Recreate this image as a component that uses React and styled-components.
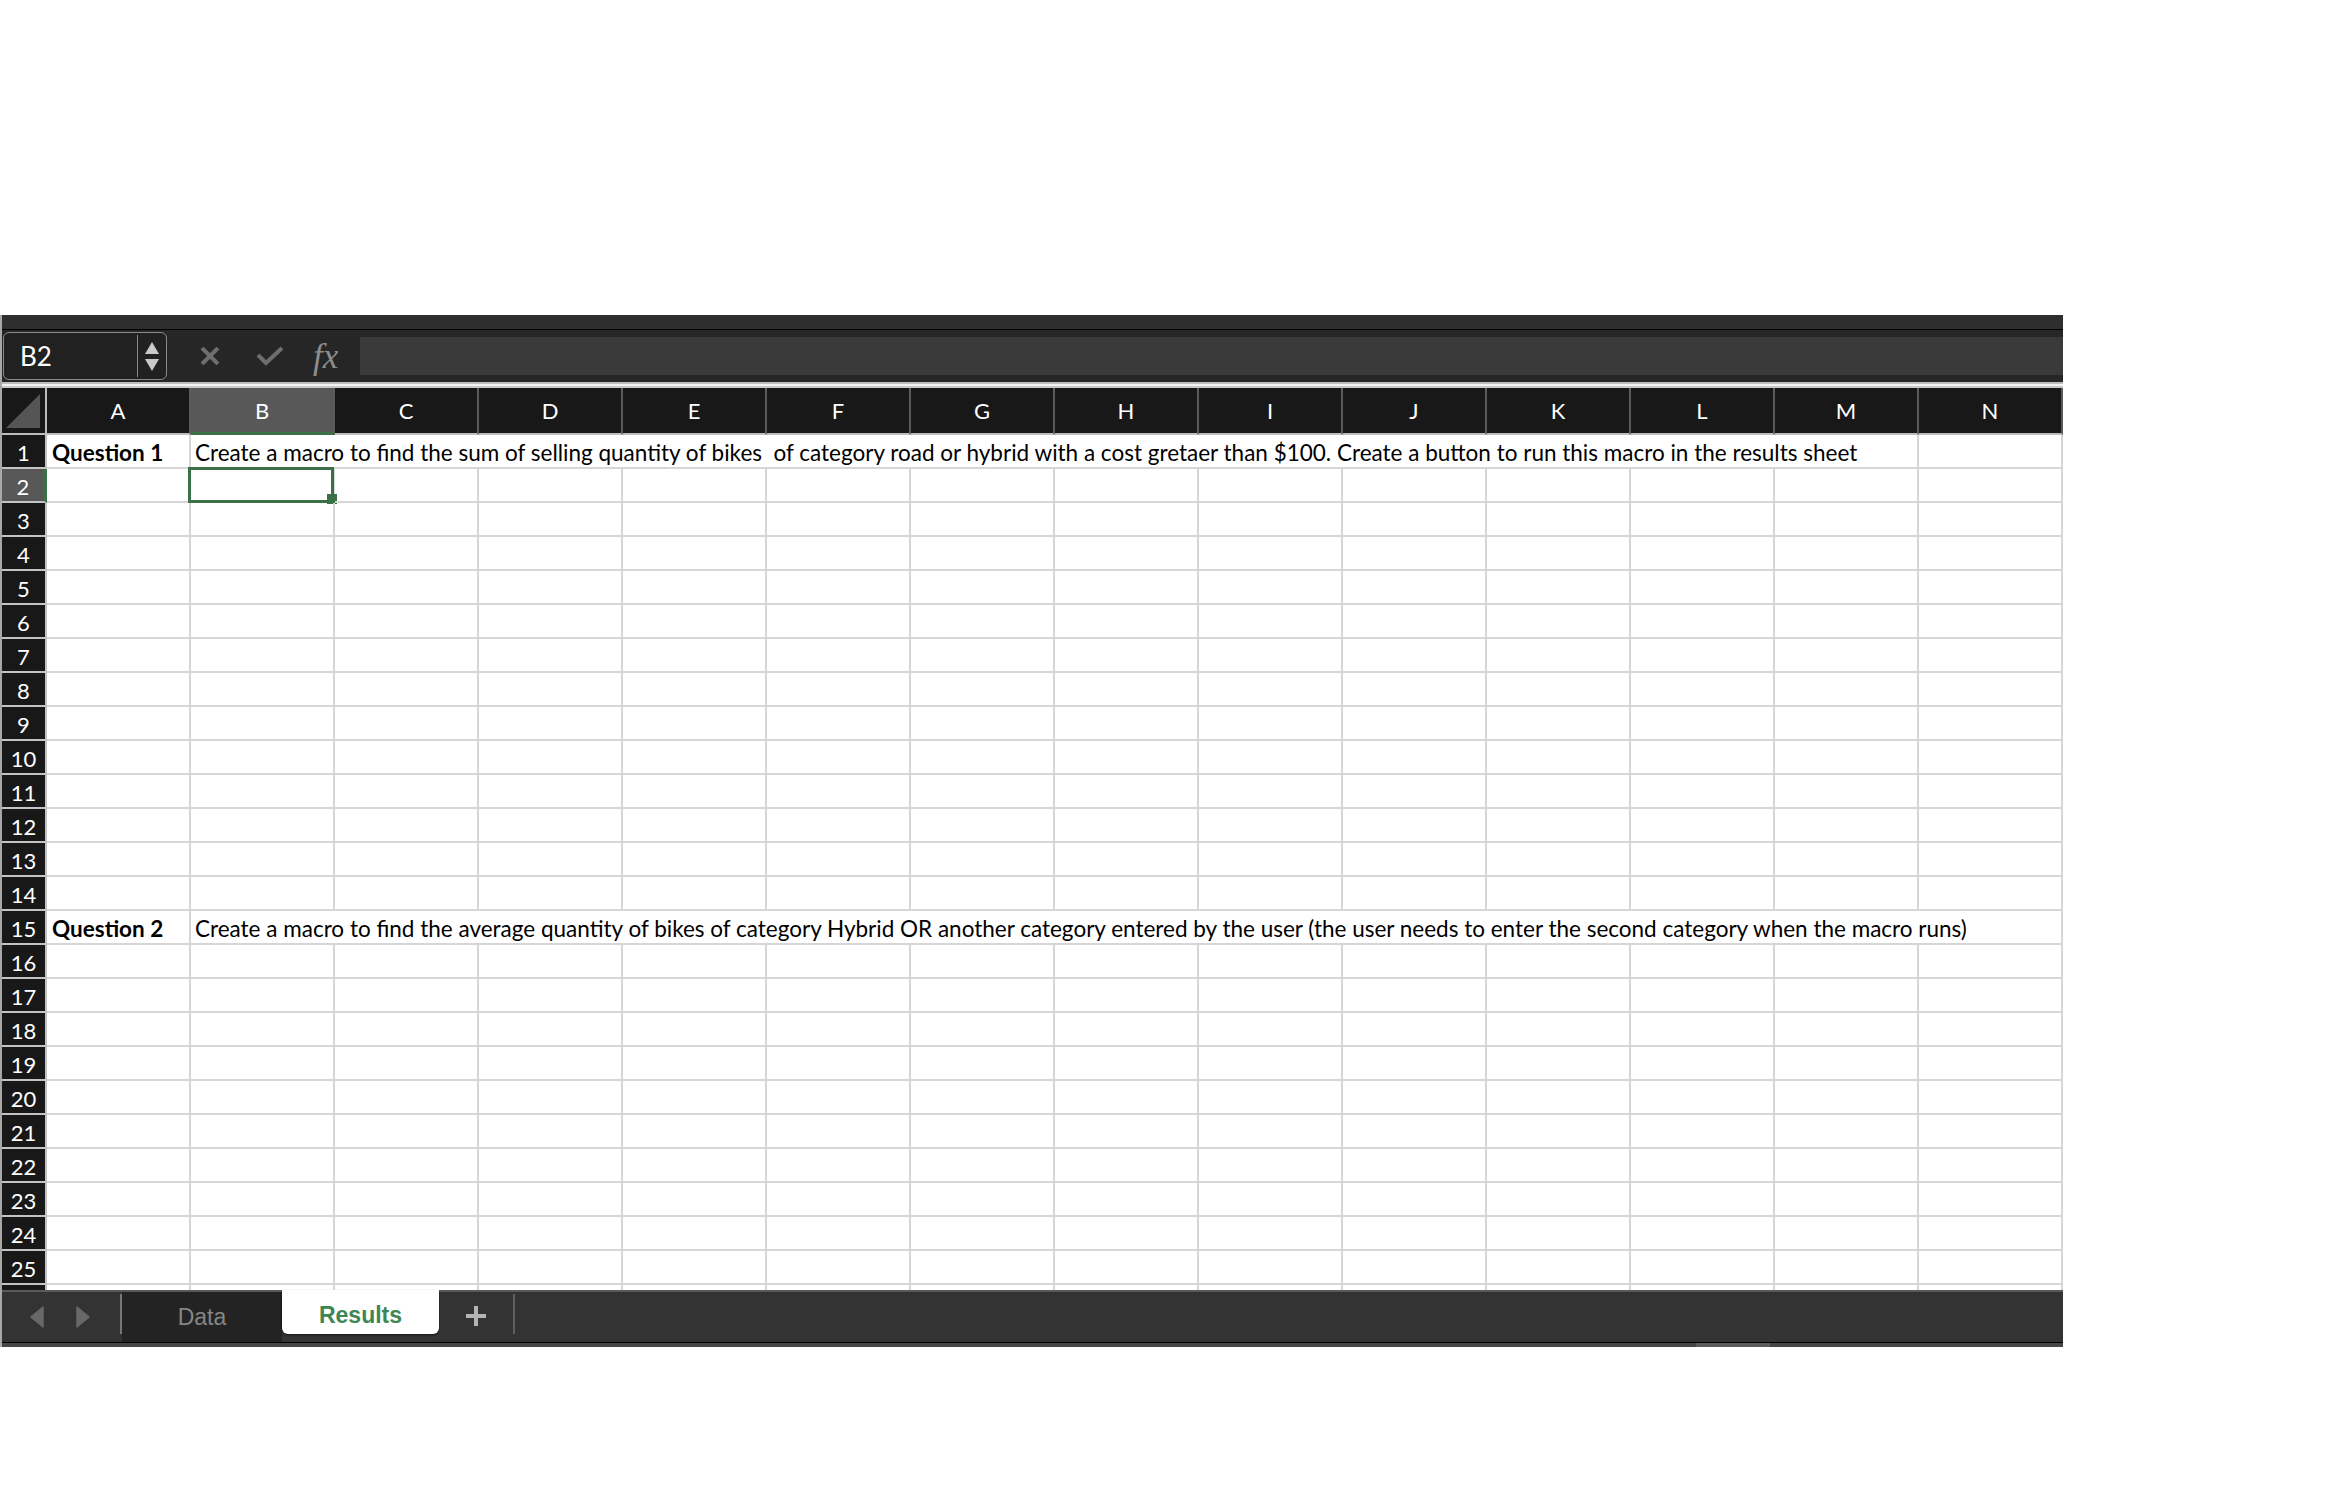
import styled, { createGlobalStyle } from "styled-components";

const GlobalStyle = createGlobalStyle`
  html, body {
    margin: 0;
    padding: 0;
    background: #ffffff;
  }
  body {
    font-family: "Lato", "Liberation Sans", sans-serif;
  }
`;

const COLUMNS = ["A", "B", "C", "D", "E", "F", "G", "H", "I", "J", "K", "L", "M", "N"];
const ROW_COUNT = 26;
const VISIBLE_ROWS = 25;
const SELECTED = { col: "B", row: 2 };

const QUESTIONS = {
  1: {
    label: "Question 1",
    text: "Create a macro to find the sum of selling quantity of bikes  of category road or hybrid with a cost gretaer than $100. Create a button to run this macro in the results sheet",
    span: 12,
  },
  15: {
    label: "Question 2",
    text: "Create a macro to find the average quantity of bikes of category Hybrid OR another category entered by the user (the user needs to enter the second category when the macro runs)",
    span: 13,
  },
};

const GREEN = "#3b7049";
const GRID_LINE = "#d6d6d6";

const Workbook = styled.div`
  width: 2063px;
  margin-top: 315px;
  border-left: 2px solid #a8a8a8;
  box-sizing: border-box;
`;

const TitleStrip = styled.div`
  height: 14px;
  background: #2e2e2e;
  border-bottom: 1px solid #000;
`;

const FormulaBar = styled.div`
  display: flex;
  align-items: center;
  height: 52px;
  background: #262626;
  padding-left: 1px;
`;

const NameBox = styled.div`
  display: flex;
  align-items: center;
  width: 164px;
  height: 48px;
  box-sizing: border-box;
  border: 1.5px solid #8a8a8a;
  border-radius: 6px;
  background: #212121;
`;

const NameText = styled.span`
  flex: 1;
  padding-left: 16px;
  color: #ffffff;
  font-size: 26px;
`;

const NameDivider = styled.span`
  width: 1.5px;
  height: 42px;
  background: #8a8a8a;
`;

const Spinner = styled.span`
  display: flex;
  flex-direction: column;
  align-items: center;
  gap: 5px;
  width: 28px;
`;

const ActionIcon = styled.span`
  display: flex;
  align-items: center;
  justify-content: center;
  width: ${(p) => p.$width}px;
  height: 40px;
`;

const Fx = styled.span`
  width: 73px;
  box-sizing: border-box;
  padding-left: 26px;
  color: #8d8d8d;
  font-family: "Liberation Serif", "DejaVu Serif", serif;
  font-style: italic;
  font-size: 35px;
  line-height: 1;
`;

const FormulaInput = styled.div`
  flex: 1;
  height: 38px;
  background: #3a3a3a;
`;

const Separator = styled.div`
  height: 6px;
  background: linear-gradient(#bdbdbd 0 2px, #f2f2f2 2px 4px, #c9c9c9 4px 6px);
`;

const Grid = styled.div`
  display: grid;
  grid-template-columns: 45px repeat(14, 144px);
  grid-template-rows: 47px repeat(${ROW_COUNT}, 34px);
  height: 902px;
  overflow: hidden;
  background: #ffffff;
`;

const Corner = styled.div`
  display: flex;
  align-items: flex-end;
  justify-content: flex-end;
  padding: 0 5px 5px 0;
  box-sizing: border-box;
  background: #181818;
  border-right: 2px solid #bdbdbd;
  border-bottom: 2px solid #bdbdbd;
`;

const ColHeader = styled.div`
  display: flex;
  align-items: center;
  justify-content: center;
  box-sizing: border-box;
  background: ${(p) => (p.$selected ? "#585858" : "#181818")};
  border-right: 2px solid #5a5a5a;
  border-bottom: ${(p) => (p.$selected ? `3px solid ${GREEN}` : "2px solid #bdbdbd")};
  color: #ffffff;
  font-size: 22px;
  padding-top: ${(p) => (p.$selected ? "1px" : "0")};
`;

const RowHeader = styled.div`
  display: flex;
  align-items: center;
  justify-content: center;
  box-sizing: border-box;
  background: ${(p) => (p.$selected ? "#585858" : "#181818")};
  border-right: ${(p) => (p.$selected ? `3px solid ${GREEN}` : "2px solid #c4c4c4")};
  border-bottom: 2px solid #c4c4c4;
  color: #ffffff;
  font-size: 22px;
  padding-top: 2px;
`;

const Cell = styled.div`
  position: relative;
  display: flex;
  align-items: center;
  box-sizing: border-box;
  grid-column: span ${(p) => p.$span || 1};
  border-right: 2px solid ${GRID_LINE};
  border-bottom: 2px solid ${GRID_LINE};
  padding: 3px 0 0 ${(p) => (p.$bold ? 5 : 4)}px;
  color: #000000;
  font-size: 22.5px;
  font-weight: ${(p) => (p.$bold ? 700 : 400)};
  white-space: pre;
`;

const Selection = styled.div`
  position: absolute;
  top: -2px;
  right: -1px;
  bottom: -2px;
  left: -3px;
  border: 3px solid ${GREEN};
  pointer-events: none;
`;

const FillHandle = styled.span`
  position: absolute;
  right: -6px;
  bottom: -4px;
  width: 10px;
  height: 10px;
  background: ${GREEN};
`;

const TabBar = styled.div`
  display: flex;
  align-items: flex-start;
  height: 52px;
  background: #333333;
  box-shadow: inset 0 2px 0 #5a5a5a;
  font-family: "Liberation Sans", Arial, sans-serif;
  font-size: 23px;
`;

const TabNav = styled.div`
  display: flex;
  align-items: center;
  gap: 32px;
  width: 118px;
  height: 50px;
  margin-top: 2px;
  padding-left: 28px;
  box-sizing: border-box;
`;

const TabDivider = styled.span`
  width: 2px;
  height: 40px;
  margin-top: 4px;
  background: ${(p) => p.$color || "#6c6c6c"};
`;

const Tab = styled.div`
  display: flex;
  align-items: center;
  justify-content: center;
  box-sizing: border-box;
  width: ${(p) => p.$width}px;
  height: ${(p) => (p.$active ? 44 : 50)}px;
  margin-top: ${(p) => (p.$active ? 0 : 2)}px;
  padding-top: ${(p) => (p.$active ? 6 : 0)}px;
  background: ${(p) => (p.$active ? "#ffffff" : "#232323")};
  border-radius: ${(p) => (p.$active ? "0 0 6px 6px" : "0")};
  box-shadow: ${(p) => (p.$active ? "0 1px 2px rgba(0, 0, 0, 0.6)" : "none")};
  color: ${(p) => (p.$active ? "#3e8654" : "#858585")};
  font-weight: ${(p) => (p.$active ? 700 : 400)};
`;

const AddSheet = styled.span`
  display: flex;
  align-items: center;
  justify-content: center;
  width: 74px;
  height: 52px;
`;

const ScrollStrip = styled.div`
  display: flex;
  height: 4px;
  border-top: 1px solid #000;
  background: #464646;
`;

const ScrollThumb = styled.span`
  width: 74px;
  margin-left: 1694px;
  background: #5c5c5c;
`;

function Triangle({ up }) {
  return (
    <svg width="14" height="12" viewBox="0 0 14 12">
      <polygon points={up ? "7,0 14,12 0,12" : "0,0 14,0 7,12"} fill="#c9c9c9" />
    </svg>
  );
}

function NavArrow({ left }) {
  return (
    <svg width="14" height="22" viewBox="0 0 14 22">
      <polygon
        points={left ? "13,1 13,21 1,11" : "1,1 1,21 13,11"}
        fill="#686868"
        stroke="#686868"
        strokeWidth="1.5"
        strokeLinejoin="round"
      />
    </svg>
  );
}

function Spreadsheet() {
  const cells = [];
  cells.push(
    <Corner key="corner">
      <svg width="34" height="34" viewBox="0 0 34 34">
        <polygon points="34,0 34,34 0,34" fill="#555555" />
      </svg>
    </Corner>
  );
  COLUMNS.forEach((c) =>
    cells.push(
      <ColHeader key={`h-${c}`} $selected={c === SELECTED.col}>
        {c}
      </ColHeader>
    )
  );

  for (let r = 1; r <= ROW_COUNT; r++) {
    cells.push(
      <RowHeader key={`r-${r}`} $selected={r === SELECTED.row}>
        {r <= VISIBLE_ROWS ? r : ""}
      </RowHeader>
    );
    const q = QUESTIONS[r];
    if (q) {
      cells.push(
        <Cell key={`${r}-A`} $bold>
          {q.label}
        </Cell>
      );
      cells.push(
        <Cell key={`${r}-B`} $span={q.span}>
          {q.text}
        </Cell>
      );
      for (let i = 1 + q.span; i < COLUMNS.length; i++) {
        cells.push(<Cell key={`${r}-${COLUMNS[i]}`} />);
      }
      continue;
    }
    COLUMNS.forEach((c) => {
      const isSelected = c === SELECTED.col && r === SELECTED.row;
      cells.push(
        <Cell key={`${r}-${c}`}>
          {isSelected && (
            <Selection>
              <FillHandle />
            </Selection>
          )}
        </Cell>
      );
    });
  }
  return <Grid>{cells}</Grid>;
}

export default function App() {
  return (
    <>
      <GlobalStyle />
      <Workbook>
        <TitleStrip />
        <FormulaBar>
          <NameBox>
            <NameText>B2</NameText>
            <NameDivider />
            <Spinner>
              <Triangle up />
              <Triangle />
            </Spinner>
          </NameBox>
          <ActionIcon $width={86}>
            <svg width="20" height="18" viewBox="0 0 20 18">
              <path d="M2 1 L18 17 M18 1 L2 17" stroke="#6e6e6e" strokeWidth="4" />
            </svg>
          </ActionIcon>
          <ActionIcon $width={34}>
            <svg width="28" height="20" viewBox="0 0 28 20">
              <path d="M2 9 L10 17 L26 2" stroke="#6e6e6e" strokeWidth="4" fill="none" />
            </svg>
          </ActionIcon>
          <Fx>fx</Fx>
          <FormulaInput />
        </FormulaBar>
        <Separator />
        <Spreadsheet />
        <TabBar>
          <TabNav>
            <NavArrow left />
            <NavArrow />
          </TabNav>
          <TabDivider $color="#777777" />
          <Tab $width={160}>Data</Tab>
          <Tab $width={157} $active>
            Results
          </Tab>
          <AddSheet>
            <svg width="22" height="22" viewBox="0 0 22 22">
              <path d="M11 1 V21 M1 11 H21" stroke="#b3b3b3" strokeWidth="4" />
            </svg>
          </AddSheet>
          <TabDivider $color="#5e5e5e" />
        </TabBar>
        <ScrollStrip>
          <ScrollThumb />
        </ScrollStrip>
      </Workbook>
    </>
  );
}
